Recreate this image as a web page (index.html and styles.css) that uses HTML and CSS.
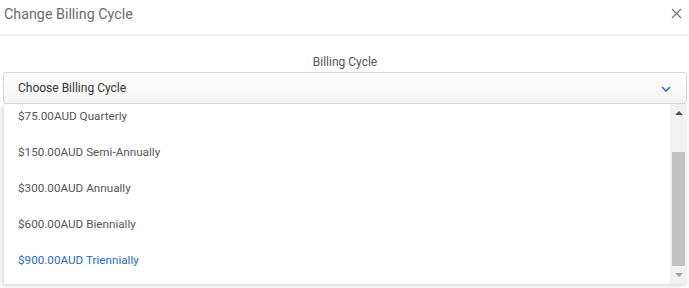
FILE: index.html
```html
<!DOCTYPE html>
<html lang="en">
<head>
  <meta charset="UTF-8">
  <title>Change Billing Cycle</title>
  <link rel="stylesheet" href="styles.css">
</head>
<body>
  <div class="modal">
    <div class="modal-header">
      <h4 class="modal-title">Change Billing Cycle</h4>
      <button class="close" aria-label="Close">
        <svg width="11" height="11" viewBox="0 0 11 11"><path d="M1 1L10 10M10 1L1 10" stroke="#777" stroke-width="1.3" fill="none"/></svg>
      </button>
    </div>

    <div class="modal-body">
      <label class="field-label">Billing Cycle</label>
      <div class="select">
        <span>Choose Billing Cycle</span>
        <svg class="chevron" width="10" height="6" viewBox="0 0 10 6"><path d="M1 1L5 5L9 1" stroke="#2a6fc0" stroke-width="1.6" fill="none"/></svg>
      </div>

      <div class="dropdown">
        <div class="options">
          <ul>
            <li>$75.00AUD Quarterly</li>
            <li>$150.00AUD Semi-Annually</li>
            <li>$300.00AUD Annually</li>
            <li>$600.00AUD Biennially</li>
            <li class="active">$900.00AUD Triennially</li>
          </ul>
        </div>
        <div class="scrollbar">
          <span class="arrow up"></span>
          <div class="track"><div class="thumb"></div></div>
          <span class="arrow down"></span>
        </div>
      </div>
    </div>
  </div>
</body>
</html>
```

FILE: styles.css
```css
body {
  margin: 0;
  background: #fff;
  font-family: Roboto, Arial, sans-serif;
  color: #555;
}

.modal {
  width: 689px;
  height: 288px;
  overflow: hidden;
}

.modal-header {
  display: flex;
  align-items: center;
  justify-content: space-between;
  height: 27px;
  padding: 0 7px 8px 4px;
  border-bottom: 1px solid #e6e6e6;
}

.modal-title {
  margin: 0;
  font-size: 14.3px;
  font-weight: 400;
  color: #6b6b6b;
}

.close {
  background: none;
  border: none;
  padding: 0;
  width: 11px;
  height: 11px;
  display: flex;
}

.modal-body {
  padding: 18px 2px 0 3px;
}

.field-label {
  display: block;
  text-align: center;
  font-size: 12px;
  color: #555;
  line-height: 16px;
}

.select {
  margin-top: 2px;
  height: 30px;
  border: 1px solid #d5d5e0;
  border-radius: 3px;
  background: linear-gradient(#fff, #f4f4f6);
  display: flex;
  align-items: center;
  justify-content: space-between;
  padding: 0 15px 0 14px;
  font-size: 12px;
  color: #333;
}

.chevron {
  margin-top: 1px;
}

.dropdown {
  display: flex;
  height: 180px;
  margin-left: 1px;
  background: #fff;
  box-shadow: -2px 2px 4px rgba(0, 0, 0, 0.15);
}

.options {
  flex: 1;
  overflow: hidden;
}

.options ul {
  list-style: none;
  margin: -6px 0 0;
  padding: 0;
}

.options li {
  height: 36px;
  line-height: 36px;
  padding-left: 14px;
  font-size: 11.7px;
  color: #555;
}

.options li.active {
  color: #2b6cbc;
}

.scrollbar {
  width: 17px;
  background: #f1f1f1;
  display: flex;
  flex-direction: column;
  align-items: center;
}

.arrow {
  width: 0;
  height: 0;
  border-left: 4px solid transparent;
  border-right: 4px solid transparent;
  margin: 7px 0;
}

.arrow.up {
  border-bottom: 4px solid #505050;
}

.arrow.down {
  border-top: 4px solid #a3a3a3;
}

.track {
  flex: 1;
  width: 100%;
  display: flex;
  flex-direction: column;
  justify-content: flex-end;
  padding: 0 2px;
  box-sizing: border-box;
}

.thumb {
  height: 114px;
  background: #c1c1c1;
}
```
